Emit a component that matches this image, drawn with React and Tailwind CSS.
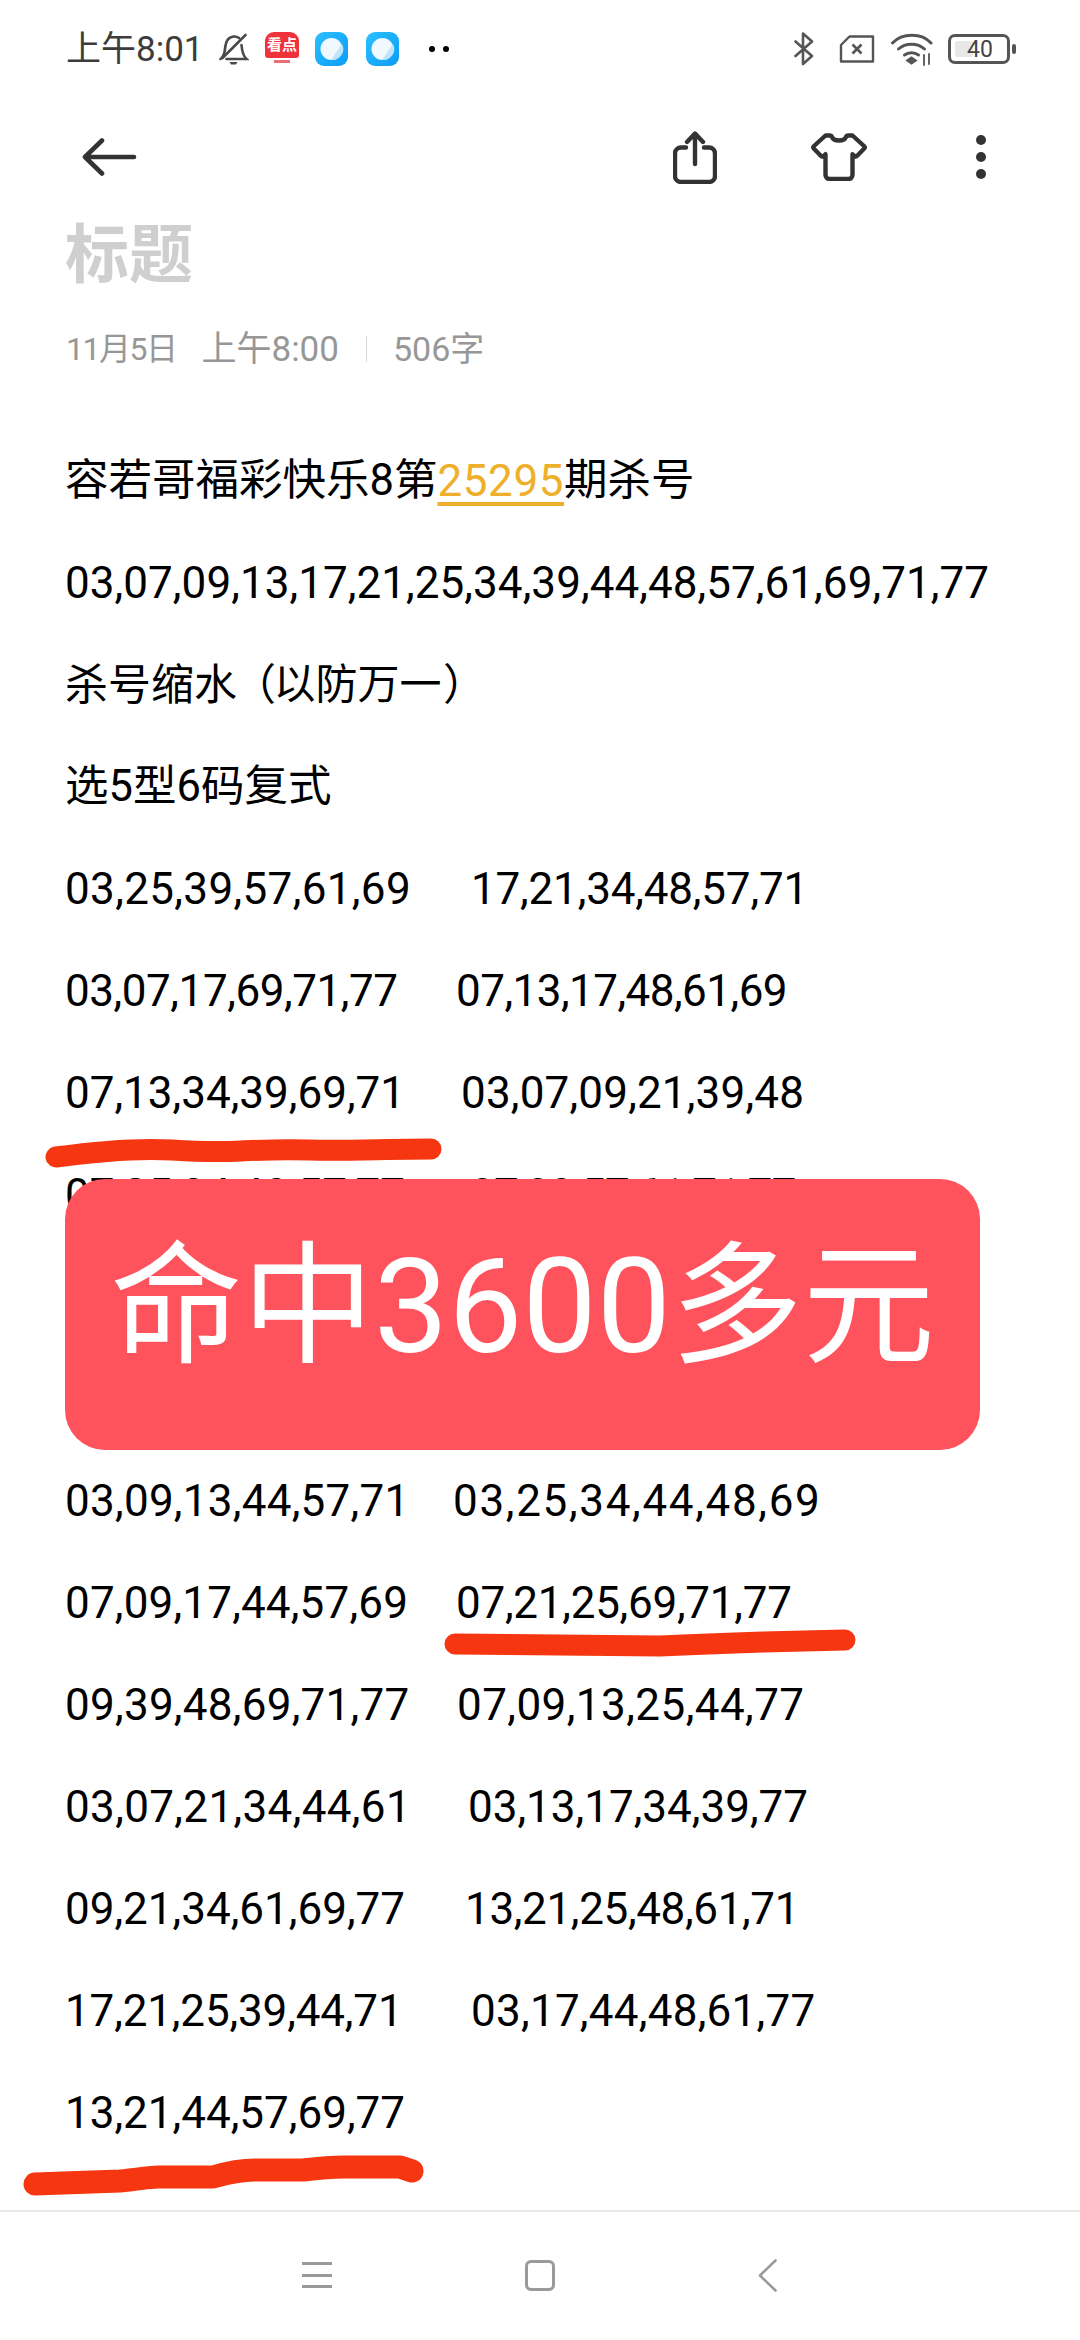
import React from "react";

const font = { fontFamily: 'Roboto, "Noto Sans CJK SC", sans-serif' };

// two-column number rows, first column width sets where the second starts
const rows = [
  { a: "03,25,39,57,61,69", b: "17,21,34,48,57,71", w: "w-[406px] tracking-[0.35px]", t: "tracking-[-0.18px]" },
  { a: "03,07,17,69,71,77", b: "07,13,17,48,61,69", w: "w-[391px] tracking-[-0.44px]", t: "tracking-[-0.53px]" },
  { a: "07,13,34,39,69,71", b: "03,07,09,21,39,48", w: "w-[396px]", t: "tracking-[0.18px]" },
  { a: "07,25,34,48,57,77", b: "07,09,57,61,71,77", w: "w-[405px]", t: "tracking-[-0.85px]" },
  { a: "", b: "", w: "w-[400px]", t: "" },
  { a: "", b: "", w: "w-[400px]", t: "" },
  { a: "03,09,13,44,57,71", b: "03,25,34,44,48,69", w: "w-[388px] tracking-[0.26px]", t: "tracking-[1.67px]" },
  { a: "07,09,17,44,57,69", b: "07,21,25,69,71,77", w: "w-[391px] tracking-[0.18px]", t: "tracking-[-0.26px]" },
  { a: "09,39,48,69,71,77", b: "07,09,13,25,44,77", w: "w-[392px] tracking-[0.26px]", t: "tracking-[0.44px]" },
  { a: "03,07,21,34,44,61", b: "03,13,17,34,39,77", w: "w-[403px] tracking-[0.35px]", t: "" },
  { a: "09,21,34,61,69,77", b: "13,21,25,48,61,71", w: "w-[400px]", t: "tracking-[-0.35px]" },
  { a: "17,21,25,39,44,71", b: "03,17,44,48,61,77", w: "w-[406px] tracking-[-0.15px]", t: "tracking-[0.26px]" },
  { a: "13,21,44,57,69,77", b: "", w: "w-[400px]", t: "" },
];

function BlueIcon({ id }) {
  return (
    <svg width="33" height="34" viewBox="0 0 33 34">
      <defs>
        <linearGradient id={id} x1="0" y1="0" x2="1" y2="1">
          <stop offset="0" stopColor="#2cc0ff" />
          <stop offset="1" stopColor="#0b9cf5" />
        </linearGradient>
      </defs>
      <rect width="33" height="34" rx="9" fill={`url(#${id})`} />
      <circle cx="16.5" cy="17" r="11" fill="#f0f9ff" />
      <path d="M27 12a11 11 0 0 1-11 16L27 12z" fill="#bfe4f8" />
    </svg>
  );
}

function StatusBar() {
  return (
    <div className="flex h-[98px] items-center pl-[66px] pr-[64px] text-[#3c3c3c]">
      <span className="w-[152px] text-[35px] leading-none">上午8:01</span>
      <svg width="31" height="33" viewBox="0 0 30 33" fill="none" stroke="#4a4a4a" strokeWidth="2.6" strokeLinecap="round">
        <path d="M2 26c3-2 4-5 4.500-10C7 9 10 4 15 3.500c2-.2 4 .3 5.500 1.500M23 12c.5 6 1.500 11 5 14H8" />
        <path d="M4 25L27 2" />
        <path d="M11 29h8l-1.500 2.500h-5z" fill="#4a4a4a" stroke="none" />
      </svg>
      <div className="ml-[16px] h-[34px] w-[34px] overflow-hidden rounded-[9px] bg-white">
        <div className="flex h-[26px] items-center justify-center rounded-b-[3px] bg-[#f0323a] text-[15px] font-bold leading-none text-white">看点</div>
        <div className="mx-auto mt-[2px] h-[3px] w-[16px] bg-[#e87070]" />
      </div>
      <div className="ml-[16px]"><BlueIcon id="blueA" /></div>
      <div className="ml-[18px]"><BlueIcon id="blueB" /></div>
      <div className="ml-[30px] flex gap-[8px]">
        <div className="h-[6px] w-[6px] rounded-full bg-black" />
        <div className="h-[6px] w-[6px] rounded-full bg-black" />
      </div>
      <div className="ml-auto flex items-center">
        <svg width="20" height="34" viewBox="0 0 20 34" fill="none" stroke="#555" strokeWidth="2.6" strokeLinecap="round" strokeLinejoin="round">
          <path d="M1.500 9.500L18 24l-9 8V1.500l9 8L1.500 24" />
        </svg>
        <svg className="ml-[25px]" width="36" height="28" viewBox="0 0 35 28" fill="none" stroke="#555" strokeWidth="2.4" strokeLinejoin="round">
          <path d="M10 1.500h23.500v25H1.500V10z" />
          <path d="M13 9.500l9 9M22 9.500l-9 9" strokeWidth="2.6" />
        </svg>
        <svg className="ml-[15px]" width="43" height="33" viewBox="0 0 41 33" fill="none" stroke="#555" strokeWidth="3" strokeLinecap="round">
          <path d="M1.500 10C11 -0.500 31 -0.500 40 10" />
          <path d="M7.500 16c7-6.500 19-6.500 26 0" />
          <path d="M13.500 22c4-3 10-3 14 0" />
          <path d="M17 27.500l3.500-2.500 3.500 2.500-3.500 2.500z" fill="#555" />
          <path d="M33 22v10M38 21v10" strokeWidth="1.800" />
        </svg>
        <div className="ml-[15px] flex items-center">
          <div className="relative flex h-[30px] w-[62px] items-center justify-center rounded-[7px] border-[3px] border-[#555]">
            <div className="absolute left-[4px] top-[4px] h-[16px] w-[18px] rounded-[2px] bg-[#e8e8e8]" />
            <span className="relative pl-[2px] text-[23px] leading-none text-[#444]">40</span>
          </div>
          <div className="ml-[2px] h-[10px] w-[4px] rounded-full bg-[#555]" />
        </div>
      </div>
    </div>
  );
}

function Toolbar() {
  return (
    <div className="flex h-[118px] items-center pl-[81px] pr-[94px]">
      <svg width="56" height="38" viewBox="0 0 54 38" fill="none" stroke="#333" strokeWidth="4.600" strokeLinecap="round" strokeLinejoin="round">
        <path d="M52 19H3M20 2.500L3 19l17 16.500" />
      </svg>
      <svg className="ml-[536px]" width="44" height="53" viewBox="0 0 44 53" fill="none" stroke="#333" strokeWidth="4.400" strokeLinecap="round" strokeLinejoin="round">
        <path d="M13 16.500H8a6 6 0 0 0-6 6V45a6 6 0 0 0 6 6h28a6 6 0 0 0 6-6V22.500a6 6 0 0 0-6-6h-5" />
        <path d="M22 33V3M14 11l8-8.500 8 8.500" />
      </svg>
      <svg className="ml-[94px]" width="56" height="48" viewBox="0 0 55 48" fill="none" stroke="#333" strokeWidth="4.400" strokeLinecap="round" strokeLinejoin="round">
        <path d="M18 2.500h-4L2.500 13c-.8.8-.8 2 0 2.800L9.500 23c1 1 2.500 0 3.500-.8l1-1V42a4 4 0 0 0 4 4h19a4 4 0 0 0 4-4V21.200l1 1c1 .8 2.500 1.800 3.500.8l7-7.200c.8-.8.800-2 0-2.800L41 2.500h-4c-1 0-2 0-2.500 1.500-1 3-4 3.500-7 3.500s-6-.5-7-3.500C20 2.500 19 2.500 18 2.500z" />
      </svg>
      <div className="ml-auto flex flex-col gap-[7px]">
        <div className="h-[10px] w-[10px] rounded-full bg-[#333]" />
        <div className="h-[10px] w-[10px] rounded-full bg-[#333]" />
        <div className="h-[10px] w-[10px] rounded-full bg-[#333]" />
      </div>
    </div>
  );
}

function TextRow({ children }) {
  return <div className="flex h-[102px] items-center whitespace-nowrap text-[44px] leading-none text-black">{children}</div>;
}

export default function App() {
  return (
    <div className="relative flex h-[2340px] w-[1080px] flex-col overflow-hidden bg-white" style={font}>
      <StatusBar />
      <Toolbar />
      <div className="flex h-[80px] items-center pl-[65px] text-[64px] font-bold leading-none text-[#cfcfcf]">标题</div>
      <div className="mt-[21px] flex h-[64px] items-center pl-[66px] leading-none text-[#979797]">
        <span className="text-[32px] tracking-[-1.5px]">11月5日</span>
        <span className="ml-[25px] text-[35px]">上午8:00</span>
        <div className="ml-[27px] h-[26px] w-[1px] bg-[#d8d8d8]" />
        <span className="ml-[26px] text-[34px]">506字</span>
      </div>
      <div className="mt-[49px] pl-[65px]">
        <TextRow>
          <span className="text-[43.5px]">容若哥福彩快乐8第</span>
          <span className="tracking-[0.6px] text-[#eeb02a] underline underline-offset-[6px]">25295</span>
          <span className="text-[43.5px]">期杀号</span>
        </TextRow>
        <TextRow><span className="tracking-[0.06px]">03,07,09,13,17,21,25,34,39,44,48,57,61,69,71,77</span></TextRow>
        <TextRow>
          <span className="text-[43px]">杀号缩水</span>
          <span className="ml-[16px] text-[43px] [font-feature-settings:'palt']">（</span>
          <span className="-ml-[1px] text-[42px]">以防万一</span>
          <span className="ml-[3px] text-[43px] [font-feature-settings:'palt']">）</span>
        </TextRow>
        <TextRow><span className="text-[43.5px]">选5型6码复式</span></TextRow>
        {rows.map((r, i) => (
          <TextRow key={i}>
            <span className={r.w}>{r.a}</span>
            <span className={r.t}>{r.b}</span>
          </TextRow>
        ))}
      </div>
      <div className="mt-auto flex h-[130px] items-center border-t-2 border-[#e8e8e8] pb-[2px] pl-[302px]">
        <div className="flex h-[26px] w-[30px] flex-col justify-between">
          <div className="h-[3px] bg-[#9a9a9a]" />
          <div className="h-[3px] bg-[#9a9a9a]" />
          <div className="h-[3px] bg-[#9a9a9a]" />
        </div>
        <div className="ml-[193px] h-[31px] w-[30px] rounded-[6px] border-[3px] border-[#9a9a9a]" />
        <svg className="ml-[203px]" width="19" height="33" viewBox="0 0 19 33" fill="none" stroke="#9a9a9a" strokeWidth="2.600" strokeLinecap="round" strokeLinejoin="round">
          <path d="M17.500 1.500L2 16.500l15.500 15" />
        </svg>
      </div>

      {/* red marker strokes drawn over the numbers */}
      <svg className="pointer-events-none absolute left-0 top-0" width="1080" height="2340" fill="none" stroke="#f63610" strokeWidth="21" strokeLinecap="round" strokeLinejoin="round">
        <path d="M56 1157C100 1151 140 1148 172 1150S220 1152 241 1151S280 1149 310 1150S390 1149 431 1149" />
        <path d="M455 1644L660 1646C700 1644 730 1643 763 1642L845 1640" />
        <path strokeWidth="23" d="M35 2184L120 2181C140 2179 150 2177 158 2177H213C230 2172 240 2170 255 2170H303C320 2168 335 2167 344 2167H400L412 2171" />
      </svg>

      <div className="absolute left-[65px] top-[1179px] flex h-[271px] w-[915px] items-center justify-center rounded-[40px] bg-[#fe525c] pb-[16px] text-[132px] leading-none text-white">
        命中3600多元
      </div>
    </div>
  );
}
